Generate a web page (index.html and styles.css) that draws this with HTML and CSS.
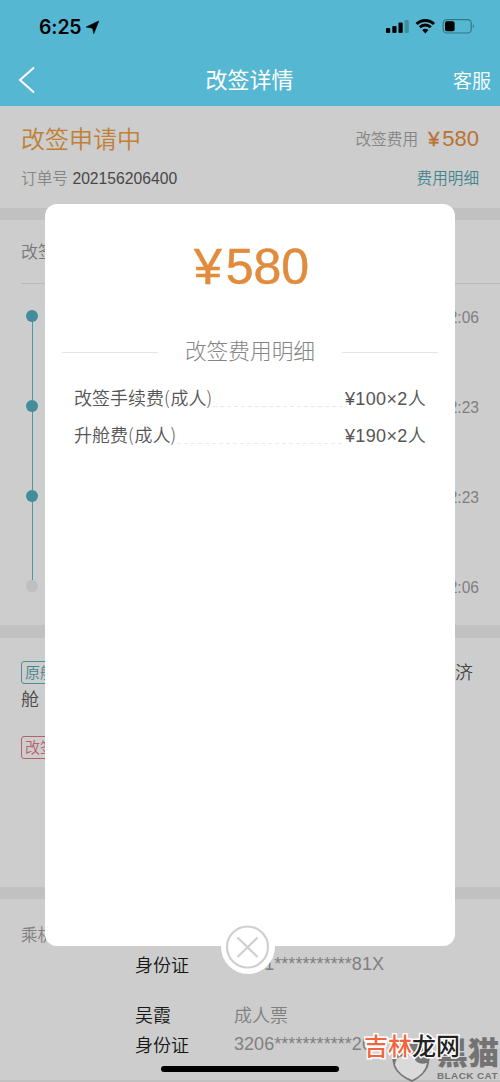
FILE: index.html
```html
<!DOCTYPE html>
<html lang="zh-CN">
<head>
<meta charset="utf-8">
<title>改签详情</title>
<link rel="stylesheet" href="styles.css">
</head>
<body>
<div class="screen">
  <header class="header">
    <div class="status">
      <span class="clock">6:25</span>
      <svg class="location" width="15" height="15" viewBox="0 0 15 15"><path d="M13.8 1 8.8 13.6 7.6 8.2 1.2 7z" stroke="#000" stroke-width=".6"/></svg>
      <svg class="signals" width="90" height="18" viewBox="0 0 90 18">
        <rect x="0" y="10" width="4.2" height="5" rx="1"/>
        <rect x="6.3" y="8" width="4.2" height="7" rx="1"/>
        <rect x="12.5" y="4.5" width="4.2" height="10.5" rx="1"/>
        <rect x="18.6" y="2" width="4.2" height="13" rx="1" fill="#3f8fa0"/>
        <path d="M30.6 6a12.5 12.5 0 0 1 17.4 0M33.8 9.3a7.9 7.9 0 0 1 11 0" fill="none" stroke="#000" stroke-width="2.9"/>
        <path d="M36.2 12.1a4.6 4.6 0 0 1 6.2 0L39.3 15.4z"/>
        <rect x="57.2" y="1.6" width="28" height="13.4" rx="3.6" fill="none" stroke="#337788" stroke-width="1.2"/>
        <rect x="59" y="3.3" width="9.6" height="10" rx="2"/>
        <path d="M86.8 6.1q2.2 2.2 0 4.4z" fill="#337788"/>
      </svg>
    </div>
    <div class="nav">
      <svg class="back" width="18" height="28" viewBox="0 0 18 28"><path d="M16 1.5 2 14 16 26.5"/></svg>
      <h1 class="title">改签详情</h1>
      <span class="service">客服</span>
    </div>
  </header>

  <section class="summary">
    <div class="row">
      <span class="state">改签申请中</span>
      <span class="fee"><span class="fee-label">改签费用</span><span class="fee-yen">¥</span><span class="fee-value">580</span></span>
    </div>
    <div class="row order">
      <span><span class="muted">订单号</span> <span class="number">202156206400</span></span>
      <span class="link">费用明细</span>
    </div>
  </section>

  <section class="progress">
    <div class="section-head">改签进度</div>
    <ol class="timeline">
      <li class="step"><i class="dot"></i><time>12:06</time></li>
      <li class="step"><i class="dot"></i><time>12:23</time></li>
      <li class="step"><i class="dot"></i><time>12:23</time></li>
      <li class="step last"><i class="dot"></i><time>12:06</time></li>
    </ol>
  </section>

  <section class="flights">
    <div class="flight"><span class="tag">原舱位</span><span class="cabin-end">济</span></div>
    <div class="cabin">舱</div>
    <div class="flight"><span class="tag changed">改签后</span></div>
  </section>

  <section class="passengers">
    <div class="passenger-label">乘机人</div>
    <div class="people">
      <span>身份证</span><span class="detail">3201***********81X</span>
      <span class="name">吴霞</span><span class="detail name">成人票</span>
      <span>身份证</span><span class="detail">3206***********20</span>
    </div>
  </section>

  <div class="modal">
    <div class="total"><span class="yen">¥</span><span>580</span></div>
    <div class="modal-title"><span>改签费用明细</span></div>
    <div class="item"><span>改签手续费<b>(</b>成人<b>)</b></span><i class="leader"></i><span class="price">¥100×2人</span></div>
    <div class="item"><span>升舱费<b>(</b>成人<b>)</b></span><i class="leader"></i><span class="price">¥190×2人</span></div>
    <div class="close">
      <svg width="54" height="54" viewBox="0 0 54 54"><circle cx="26.5" cy="27" r="20.5"/><path d="m16.5 17.5 20 19.5m0-19.5-20 19.5"/></svg>
    </div>
  </div>

  <div class="home-bar"></div>

  <div class="black-cat">
    <svg width="42" height="46" viewBox="0 0 42 46">
      <path d="M17 4 22 1l3 3q6 3 13 4 2 12-1 22-4 9-16 15Q7 39 3 30 0 20 1 9q9 0 16-5z" fill="#777"/>
      <path d="M4 28q0-8 8-9l14-2q-4 5 0 8 4 3 10 1-2 11-15 17Q8 38 4 28z" fill="#dadada"/>
    </svg>
    <div class="cat-text"><span class="cat-cn">黑猫</span><span class="cat-en">BLACK CAT</span></div>
  </div>
  <div class="site-mark"><span>吉林</span>龙网</div>
</div>
</body>
</html>
```
FILE: styles.css
```css
* { box-sizing: border-box; }
body {
  margin: 0;
  font-family: "Liberation Sans", "Noto Sans CJK SC", sans-serif;
  color: #484848;
}
.screen {
  position: relative;
  width: 500px;
  height: 1082px;
  overflow: hidden;
  background: #cdcdcd;
}
.header { height: 106px; background: #55b7d1; }
.status {
  display: flex;
  align-items: center;
  height: 54px;
  padding: 0 24px 0 39px;
}
.clock { font: 600 19.4px/20px Inter, sans-serif; color: #000; letter-spacing: -.1px; }
.location { margin-left: 4px; }
.signals { margin-left: auto; }
.nav {
  display: grid;
  grid-template-columns: 100px 1fr 100px;
  align-items: center;
  height: 52px;
  padding: 0 9px 0 18px;
  color: #fff;
}
.back { fill: none; stroke: #fff; stroke-width: 2; }
.title {
  margin: 2px 0 0 -10px;
  font-size: 22px;
  line-height: 30px;
  font-weight: 400;
  text-align: center;
}
.service { margin-top: -2px; font-size: 19px; font-weight: 350; text-align: right; }

.summary { height: 102px; padding: 12px 21px 0; }
.row { display: flex; justify-content: space-between; align-items: center; height: 40px; }
.state { margin-top: -1px; font-size: 24px; font-weight: 350; color: #c08035; }
.fee { display: flex; align-items: center; margin-top: 2px; font-size: 22px; color: #b97235; }
.fee-label { margin: -1px 10px 0 0; font-size: 15.7px; font-weight: 350; color: #858585; }
.fee-yen { margin-right: 3px; font-size: 20px; -webkit-text-stroke: .4px #b97235; }
.order { height: 38px; font-size: 15.7px; }
.muted { font-weight: 350; color: #858585; }
.number { font-size: 15.7px; }
.link { font-size: 15.6px; font-weight: 350; color: #43858f; }

.progress { height: 430px; border: solid #c1c1c1; border-width: 12px 0 13px; }
.section-head {
  height: 64px;
  margin-left: 21px;
  border-bottom: 1px solid #bababa;
  font-size: 17px;
  font-weight: 350;
  line-height: 65px;
  color: #777;
}
.timeline { margin: 0; padding: 26px 21px 0 26px; list-style: none; }
.step {
  display: flex;
  justify-content: space-between;
  height: 90px;
  background: linear-gradient(#4b98a5, #4b98a5) 6px 6px / 1px 90px no-repeat;
}
.step.last { background: none; }
.dot { width: 12px; height: 12px; border-radius: 50%; background: #438c9c; }
.step.last .dot { background: #bfbfbf; }
.step time { font-size: 15.6px; line-height: 15px; color: #808080; }

.flights { height: 249px; padding: 22px 21px 0; font-size: 18px; font-weight: 350; }
.flight { display: flex; justify-content: space-between; align-items: center; height: 24px; }
.tag {
  height: 23px;
  padding: 0 3px;
  border: 1.5px solid #4b8f99;
  border-radius: 3px;
  font-size: 15px;
  line-height: 21px;
  color: #43858f;
}
.tag.changed { border-color: #b6606d; color: #b6606d; }
.cabin-end { margin: -2px 6px 0 0; }
.cabin { height: 51px; line-height: 32px; }

.passengers {
  display: flex;
  height: 195px;
  border: solid #c1c1c1;
  border-width: 12px 0 2px;
}
.passenger-label { width: 114px; margin-left: 21px; font-size: 16.5px; font-weight: 350; line-height: 72px; color: #808080; }
.people {
  display: grid;
  grid-template-columns: 99px 1fr;
  grid-template-rows: 29px 52px 27px;
  align-items: center;
  align-content: start;
  padding-top: 50px;
  font-size: 18px;
  font-weight: 350;
  color: #161616;
}
.people .name { align-self: end; line-height: 27px; }
.detail { padding-top: 1px; color: #808080; letter-spacing: .05px; }
.people .name { padding-top: 0; }

.modal {
  position: absolute;
  left: 45px;
  top: 204px;
  width: 410px;
  height: 742px;
  padding: 34px 17px 0;
  border-radius: 12px;
  background: #fff;
}
.total {
  display: flex;
  justify-content: center;
  padding-left: 3px;
  font-size: 50px;
  line-height: 58px;
  color: #e08c3c;
  -webkit-text-stroke: .5px #e08c3c;
}
.yen { margin-right: 4px; }
.modal-title {
  display: flex;
  align-items: center;
  justify-content: space-between;
  height: 30px;
  margin: 41px 0 12px;
  font-size: 21.7px;
  font-weight: 300;
  color: #858585;
}
.modal-title span { line-height: 30px; }
.modal-title::before, .modal-title::after { content: ""; width: 96px; height: 1px; background: #e4e4e4; }
.item {
  display: flex;
  align-items: center;
  height: 36px;
  margin: 0 12px;
  font-size: 18px;
  font-weight: 350;
  color: #555;
}
.item + .item { margin-top: 1px; }
.item b { margin-right: .8px; font-weight: 300; font-family: "Noto Sans CJK SC", sans-serif; }
.price { letter-spacing: .35px; }
.leader { flex: 1; height: 1px; margin-top: 19px; background: repeating-linear-gradient(90deg, #eaeaea 0 4px, transparent 4px 7px); }
.close { position: absolute; left: 176px; bottom: -28px; width: 54px; height: 54px; border-radius: 50%; background: #fff; }
.close svg { display: block; fill: none; stroke: #cfcfcf; stroke-width: 2.2; }

.home-bar { position: absolute; left: 161px; bottom: 10px; width: 178px; height: 6px; border-radius: 3px; background: #000; }
.black-cat { position: absolute; left: 391px; top: 1037px; display: flex; color: #737373; }
.cat-text { display: flex; flex-direction: column; margin-left: 4px; white-space: nowrap; }
.cat-cn { font-size: 31px; line-height: 34px; font-weight: 900; }
.cat-en { font: 700 9.9px/9px "Liberation Sans", sans-serif; letter-spacing: .45px; }
.site-mark {
  position: absolute;
  left: 364px;
  top: 1032px;
  font-size: 24px;
  line-height: 30px;
  font-weight: 500;
  color: #222;
  white-space: nowrap;
  paint-order: stroke fill;
  -webkit-text-stroke: 3px #fff;
}
.site-mark span { color: #f1663e; }
```
